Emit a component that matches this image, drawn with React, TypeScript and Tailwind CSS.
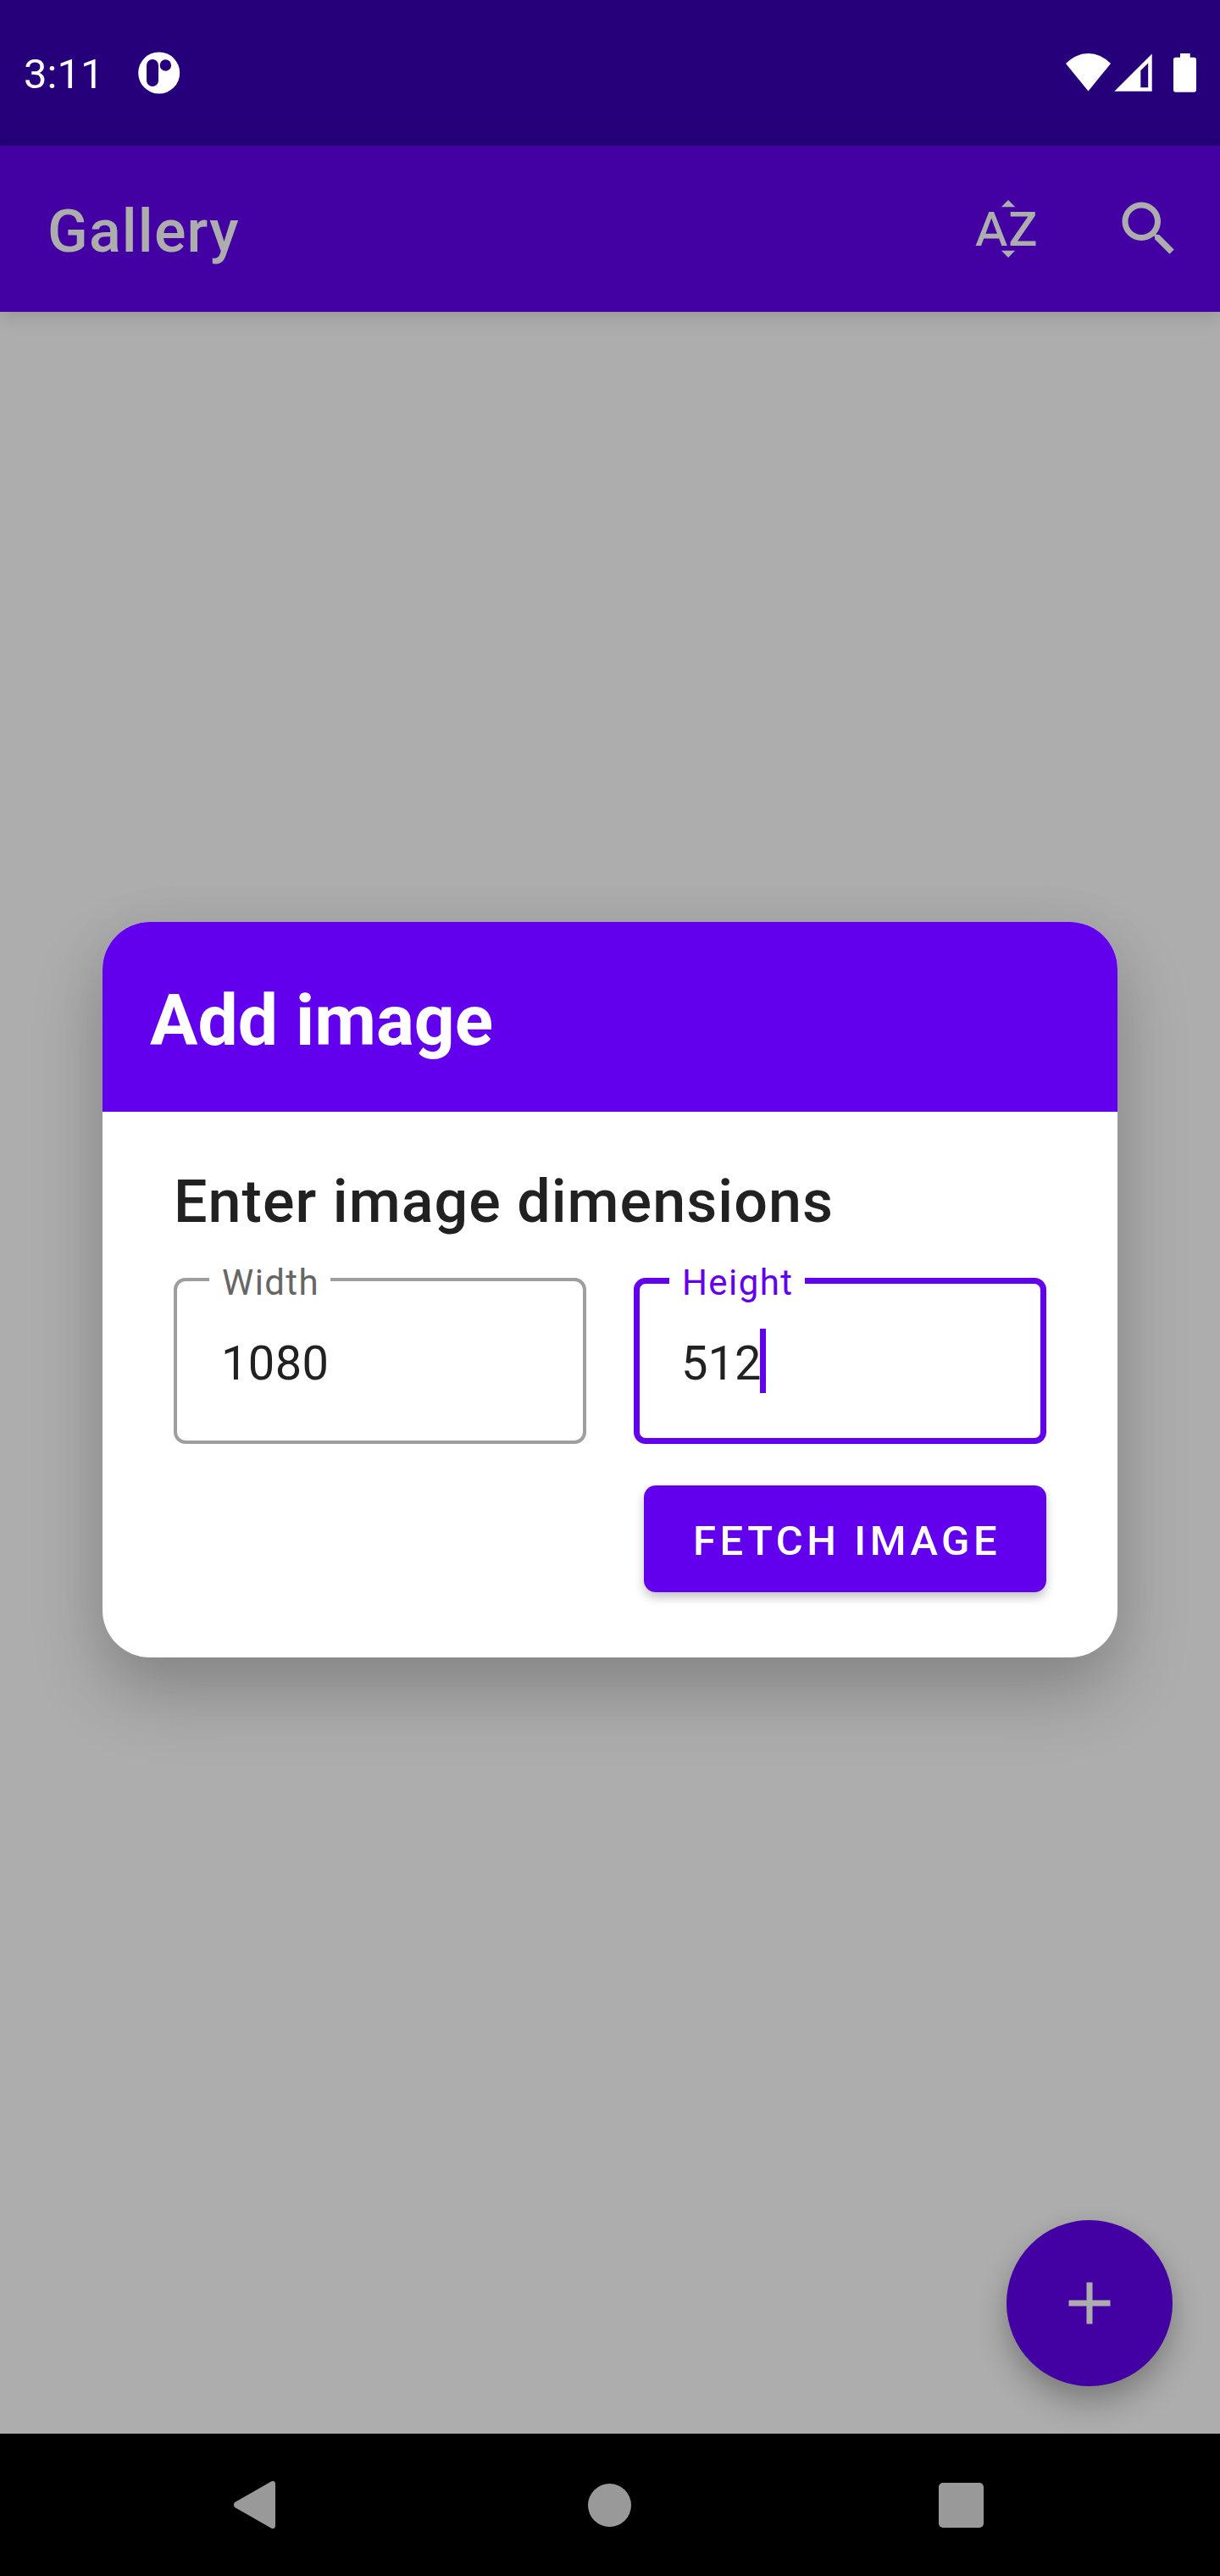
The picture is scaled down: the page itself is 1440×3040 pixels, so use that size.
import React from "react";
import { MdAdd, MdSearch, MdSortByAlpha } from "react-icons/md";

function StatusBar() {
  return (
    <div className="flex h-[172px] shrink-0 items-center justify-between bg-[#25007a] text-white">
      <div className="flex items-center pl-[28px]">
        <span className="w-[135px] pt-[4px] text-[49px] leading-[58px]">3:11</span>
        <svg width="50" height="50" viewBox="0 0 50 50">
          <circle cx="24.7" cy="25" r="24.5" fill="white" />
          <rect x="10" y="9" width="14" height="32" rx="7" fill="#25007a" />
          <circle cx="32.4" cy="16" r="6.7" fill="#25007a" />
        </svg>
      </div>
      <svg width="182" height="172" viewBox="1258 0 182 172" fill="white">
        <path d="M1258 75Q1270 63 1284.5 63T1311 75L1284.5 107.5Z" />
        <path fillRule="evenodd" d="M1315.3 107.7L1359.7 63.5V107.7ZM1346.3 103.3H1355.2V74.5L1346.3 83.3Z" />
        <path d="M1393 63h11.7v4.7h4.6q2.7 0 2.7 2.7v35.6q0 2.7-2.7 2.7h-21.6q-2.7 0-2.7-2.7V70.4q0-2.7 2.7-2.7h5.3z" />
      </svg>
    </div>
  );
}

function AppBar() {
  return (
    <header className="relative flex h-[196px] shrink-0 items-center bg-[#4300a2] pr-[42px] pl-[56px] text-[#adadad] shadow-[0_4px_22px_rgba(0,0,0,0.14)]">
      <h1 className="flex-1 pt-[6px] text-[70px] leading-[82px] font-medium tracking-[1.2px]">Gallery</h1>
      <div className="flex gap-[84px]">
        <MdSortByAlpha size={84} />
        <MdSearch size={84} />
      </div>
    </header>
  );
}

function Field({ label, value, focused = false }: { label: string; value: string; focused?: boolean }) {
  return (
    <div
      className={
        focused
          ? "relative flex h-[196px] w-[487px] items-center rounded-[14px] border-[7px] border-[#6200ee] pl-[49px]"
          : "relative flex h-[196px] w-[487px] items-center rounded-[14px] border-[4px] border-[#9e9e9e] pl-[52px]"
      }
    >
      <label
        className={
          focused
            ? "absolute top-[-26px] left-[35px] w-[160px] bg-white pl-[15px] text-[42px] leading-[50px] tracking-[1.4px] text-[#6200ee]"
            : "absolute top-[-23px] left-[38px] w-[143px] bg-white pl-[15px] text-[42px] leading-[50px] tracking-[1.4px] text-[#666666]"
        }
      >
        {label}
      </label>
      <span
        className={
          focused
            ? "pt-[6px] text-[56px] leading-[66px] text-[#212121]"
            : "pt-[6px] text-[56px] leading-[66px] tracking-[0.4px] text-[#212121]"
        }
      >
        {value}
      </span>
      {focused && <span className="-ml-[1px] h-[76px] w-[7px] bg-[#6200ee]" />}
    </div>
  );
}

function AddImageDialog() {
  return (
    <section className="h-[868px] w-[1198px] overflow-hidden rounded-[56px] bg-white shadow-[0_42px_84px_rgba(0,0,0,0.22),0_0_70px_rgba(0,0,0,0.04)]">
      <div className="flex h-[224px] items-center bg-[#6200ee] pt-[10px] pl-[56px]">
        <h2 className="text-[84px] leading-[98px] font-bold text-white">Add image</h2>
      </div>
      <div className="flex flex-col px-[84px] pt-[65px]">
        <h3 className="text-[70px] leading-[82px] font-medium tracking-[1.05px] text-[#212121]">
          Enter image dimensions
        </h3>
        <div className="mt-[49px] flex justify-between">
          <Field label="Width" value="1080" />
          <Field label="Height" value="512" focused />
        </div>
        <button className="mt-[49px] h-[126px] w-[475px] self-end rounded-[14px] bg-[#6200ee] pt-[5px] pl-[58px] text-left text-[49px] leading-[58px] font-medium tracking-[4.5px] whitespace-nowrap text-white shadow-[0_6px_12px_rgba(0,0,0,0.24)]">
          FETCH IMAGE
        </button>
      </div>
    </section>
  );
}

function NavigationBar() {
  return (
    <nav className="flex h-[168px] shrink-0 items-center justify-between bg-black pr-[279px] pl-[275px]">
      <svg width="56" height="58" viewBox="0 0 56 58" fill="#999999">
        <path d="M2.2 26L45.5 1.2Q50 0 50 4.5V53.5Q50 58 45.5 56.8L2.2 32Q-.5 29 2.2 26Z" />
      </svg>
      <div className="h-[51px] w-[51px] rounded-full bg-[#999999]" />
      <div className="h-[53px] w-[53px] rounded-[5px] bg-[#999999]" />
    </nav>
  );
}

export default function App() {
  return (
    <div className="relative flex h-[3040px] w-[1440px] flex-col overflow-hidden bg-[#adadad] font-['Roboto',sans-serif]">
      <StatusBar />
      <AppBar />
      <main className="flex flex-1 items-end justify-end p-[56px]">
        <button className="grid h-[196px] w-[196px] place-items-center rounded-full bg-[#4300a2] text-[#adadad] shadow-[0_20px_36px_rgba(0,0,0,0.26),0_0_20px_rgba(0,0,0,0.04)]">
          <MdAdd size={84} />
        </button>
      </main>
      <NavigationBar />
      <div className="absolute inset-x-0 top-[172px] bottom-[168px] flex items-center justify-center">
        <AddImageDialog />
      </div>
    </div>
  );
}
